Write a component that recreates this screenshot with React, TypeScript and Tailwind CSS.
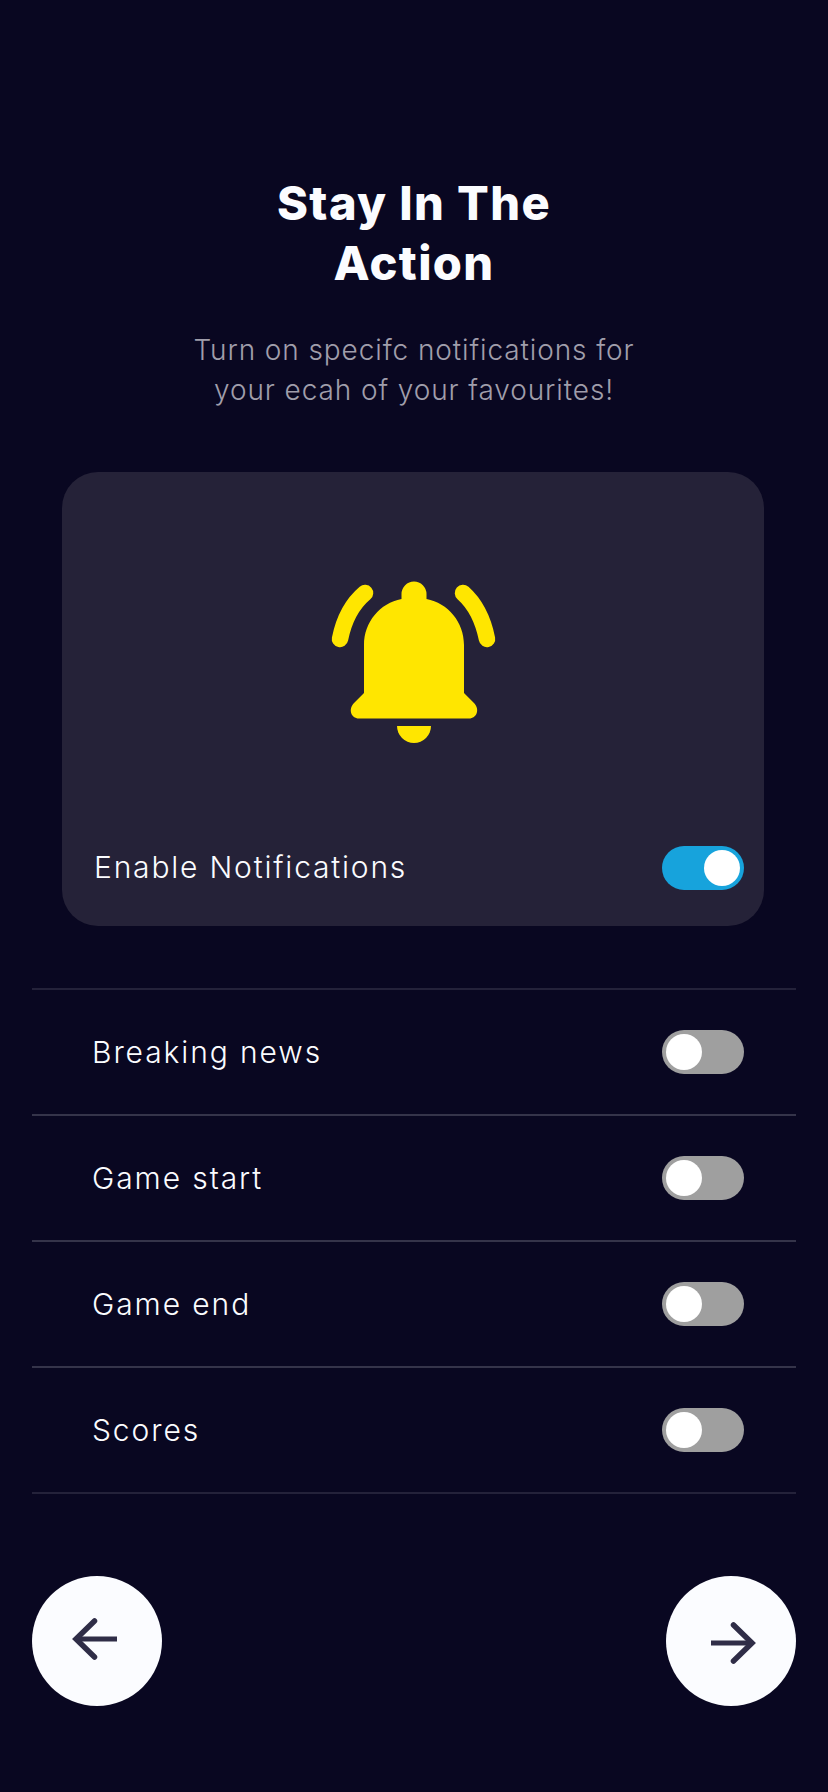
const rows = ["Breaking news", "Game start", "Game end", "Scores"];

function Toggle({ on }: { on?: boolean }) {
  return (
    <div
      className={`flex h-[44px] w-[82px] items-center rounded-full p-[4px] ${
        on ? "justify-end bg-[#17a3dc]" : "justify-start bg-[#9f9f9f]"
      }`}
    >
      <div className="h-[36px] w-[36px] rounded-full bg-white" />
    </div>
  );
}

function Bell() {
  return (
    <svg width="270" height="220" viewBox="0 0 270 220" fill="none">
      <path
        d="M84 153V105C84 82 100 63 121.5 59V54A12.5 12.5 0 0 1 146.5 54V59C168 63 184 82 184 105V153L194 163C200 169 197 178.5 189 178.5H79C71 178.5 68 169 74 163Z"
        fill="#ffe600"
      />
      <path d="M117 186H151A17 17 0 0 1 117 186Z" fill="#ffe600" />
      <path d="M85 53Q66 69 60 99" stroke="#ffe600" strokeWidth="16.5" strokeLinecap="round" />
      <path d="M183 53Q201 69 207 99" stroke="#ffe600" strokeWidth="16.5" strokeLinecap="round" />
    </svg>
  );
}

function Arrow({ flip }: { flip?: boolean }) {
  return (
    <svg width="46" height="46" viewBox="0 0 46 46" fill="none" className={flip ? "-scale-x-100" : ""}>
      <path d="M45 23H6" stroke="currentColor" strokeWidth="5" />
      <path d="M22.5 5L4 23L22.5 41" stroke="currentColor" strokeWidth="5.5" strokeLinecap="round" />
    </svg>
  );
}

export default function App() {
  return (
    <div className="flex h-[1792px] w-[828px] flex-col overflow-hidden bg-[#090721] font-['Inter',sans-serif] text-[#fbfcff]">
      <h1 className="mt-[173px] text-center text-[47px] leading-[60px] font-extrabold tracking-[1.4px]">
        Stay In The
        <br />
        Action
      </h1>
      <p className="mt-[37px] text-center text-[28px] leading-[40px] font-light tracking-[0.9px] text-[#a09eab]">
        Turn on specifc notifications for
        <br />
        your ecah of your favourites!
      </p>

      <div className="mt-[62px] mr-[64px] ml-[62px] flex h-[454px] flex-col rounded-[36px] bg-[#252238]">
        <div className="mt-[68px] flex justify-center pl-[4px]">
          <Bell />
        </div>
        <div className="mt-[85px] flex items-center justify-between pr-[20px] pl-[32px]">
          <span className="text-[30px] font-light tracking-[1.8px]">Enable Notifications</span>
          <Toggle on />
        </div>
      </div>

      <div className="mx-[32px] mt-[62px] border-t-2 border-[#24223a]">
        {rows.map((label, i) => (
          <div
            key={label}
            className={`flex h-[126px] items-center justify-between border-b-2 pr-[52px] pl-[60px] ${
              i === 3 ? "border-[#24223a]" : "border-[#35344a]"
            }`}
          >
            <span className="text-[30px] font-light tracking-[1.9px]">{label}</span>
            <Toggle />
          </div>
        ))}
      </div>

      <div className="mx-[32px] mt-[82px] flex justify-between">
        <button className="flex h-[130px] w-[130px] items-center justify-center rounded-full bg-[#fbfcff] pr-[4px] pb-[5px] text-[#2f2d47]">
          <Arrow />
        </button>
        <button className="flex h-[130px] w-[130px] items-center justify-center rounded-full bg-[#fbfcff] pt-[4px] pl-[3px] text-[#2f2d47]">
          <Arrow flip />
        </button>
      </div>
    </div>
  );
}
